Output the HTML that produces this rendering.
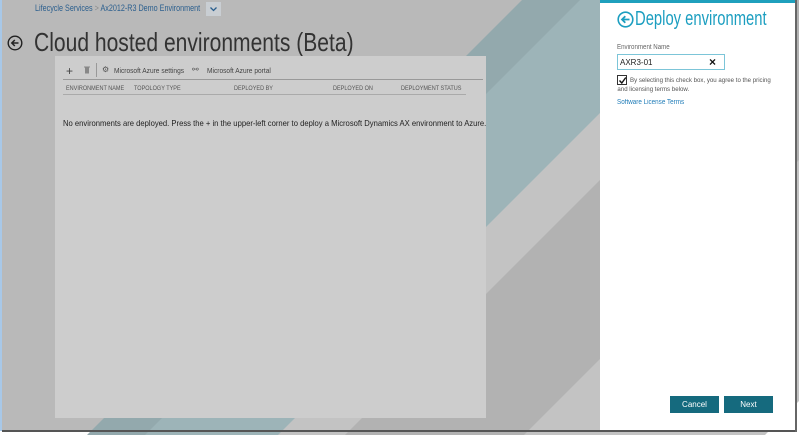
<!DOCTYPE html>
<html><head><meta charset="utf-8"><style>
*{margin:0;padding:0;box-sizing:border-box}
html,body{width:799px;height:435px;overflow:hidden}
body{background:#fff;position:relative;font-family:"Liberation Sans",sans-serif}
.a{position:absolute;white-space:nowrap}
svg{display:block}
.sx{transform-origin:0 0;display:inline-block}
</style></head><body>
<svg class="a" style="left:0;top:0" width="799" height="435">
<rect x="0" y="0" width="796" height="431" fill="#b9b9b9"/>
<polygon points="522,0 900,0 0,900 0,522" fill="#93a9ad"/>
<polygon points="580,0 900,0 0,900 0,580" fill="#9db4b8"/>
<polygon points="713,0 900,0 0,900 0,713" fill="#c3c3c3"/>
<polygon points="780,0 1000,0 0,1000 0,780" fill="#b2b2b2"/>
<polygon points="959,0 1200,0 0,1200 0,959" fill="#c3c3c3"/>
<rect x="0" y="0" width="2" height="431" fill="#a8c8e8"/>
<rect x="2" y="430" width="795" height="2" fill="#555"/>
<rect x="795" y="0" width="2" height="432" fill="#666"/>
</svg>
<div class="a" style="left:600px;top:0;width:195px;height:430px;background:#fff"></div>
<div class="a" style="left:600px;top:0;width:195px;height:3px;background:#1fa0bd"></div>

<div class="a" style="left:35px;top:3px;font-size:9px;color:#2b5f8e"><span class="sx" style="transform:scaleX(.8)">Lifecycle Services <span style="color:#888">&gt;</span> Ax2012-R3 Demo Environment</span></div>
<div class="a" style="left:206px;top:2px;width:15px;height:14px;background:#c9ced3"></div>
<svg class="a" style="left:209px;top:5px" width="9" height="8"><path d="M1.5 2.5 L4.5 5.5 L7.5 2.5" stroke="#2b5f8e" stroke-width="1.3" fill="none"/></svg>

<svg class="a" style="left:7px;top:35px" width="16" height="16"><circle cx="8" cy="8" r="6.8" stroke="#222" stroke-width="1.4" fill="none"/><path d="M11.5 8H4.8M7.8 5L4.8 8L7.8 11" stroke="#222" stroke-width="1.5" fill="none"/></svg>
<div class="a" style="left:34px;top:27px;font-size:26px;color:#333;font-weight:300"><span class="sx" style="transform:scaleX(.81)">Cloud hosted environments (Beta)</span></div>

<div class="a" style="left:55px;top:56px;width:431px;height:362px;background:#cdcdcd"></div>
<div class="a" style="left:66px;top:64px;font-size:12px;color:#444">+</div>
<svg class="a" style="left:84px;top:66px" width="6" height="8"><rect x="1" y="1.5" width="4" height="6" fill="#888"/><rect x="0" y="0.5" width="6" height="1" fill="#888"/></svg>
<div class="a" style="left:96px;top:63px;width:1px;height:14px;background:#999"></div>
<div class="a" style="left:102px;top:65px;font-size:8px;color:#555">⚙</div>
<div class="a" style="left:114px;top:66px;font-size:7.5px;color:#444"><span class="sx" style="transform:scaleX(.88)">Microsoft Azure settings</span></div>
<div class="a" style="left:192px;top:65px;font-size:8px;color:#555">⚯</div>
<div class="a" style="left:207px;top:66px;font-size:7.5px;color:#444"><span class="sx" style="transform:scaleX(.88)">Microsoft Azure portal</span></div>
<div class="a" style="left:63px;top:79px;width:420px;height:1px;background:#999"></div>
<div class="a" style="left:66px;top:85px;font-size:6.5px;color:#555"><span class="sx" style="transform:scaleX(.85)">ENVIRONMENT NAME</span></div>
<div class="a" style="left:134px;top:85px;font-size:6.5px;color:#555"><span class="sx" style="transform:scaleX(.85)">TOPOLOGY TYPE</span></div>
<div class="a" style="left:234px;top:85px;font-size:6.5px;color:#555"><span class="sx" style="transform:scaleX(.85)">DEPLOYED BY</span></div>
<div class="a" style="left:333px;top:85px;font-size:6.5px;color:#555"><span class="sx" style="transform:scaleX(.85)">DEPLOYED ON</span></div>
<div class="a" style="left:401px;top:85px;font-size:6.5px;color:#555"><span class="sx" style="transform:scaleX(.85)">DEPLOYMENT STATUS</span></div>
<div class="a" style="left:63px;top:94px;width:403px;height:1px;background:#aaa"></div>
<div class="a" style="left:63px;top:118px;font-size:8.5px;color:#222"><span class="sx" style="transform:scaleX(.9)">No environments are deployed. Press the + in the upper-left corner to deploy a Microsoft Dynamics AX environment to Azure.</span></div>

<svg class="a" style="left:617px;top:11px" width="17" height="17"><circle cx="8.5" cy="8.5" r="7.3" stroke="#1b9ec0" stroke-width="1.6" fill="none"/><path d="M12.5 8.5H5M8.3 5.2L5 8.5L8.3 11.8" stroke="#1b9ec0" stroke-width="1.8" fill="none"/></svg>
<div class="a" style="left:635px;top:8px;font-size:20px;color:#1b9ec0"><span class="sx" style="transform:scaleX(.74)">Deploy environment</span></div>
<div class="a" style="left:617px;top:44px;font-size:7px;color:#666"><span class="sx" style="transform:scaleX(.88)">Environment Name</span></div>
<div class="a" style="left:617px;top:54px;width:108px;height:16px;border:1.5px solid #7cc5d8;background:#fff"></div>
<div class="a" style="left:620px;top:58px;font-size:8px;color:#222">AXR3-01</div>
<div class="a" style="left:709px;top:55px;font-size:12px;color:#111;font-weight:bold">×</div>
<div class="a" style="left:617px;top:75px;width:10px;height:10px;border:1px solid #333;background:#fff"></div>
<svg class="a" style="left:618px;top:76px" width="9" height="9"><path d="M1.5 4.5L3.8 7L7.8 1.5" stroke="#111" stroke-width="1.4" fill="none"/></svg>
<div class="a" style="left:630px;top:76px;font-size:6.8px;color:#555;line-height:9px"><span class="sx" style="transform:scaleX(.9)">By selecting this check box, you agree to the pricing<br><span style="margin-left:-14px">and licensing terms below.</span></span></div>
<div class="a" style="left:617px;top:99px;font-size:7px;color:#1f7cb8"><span class="sx" style="transform:scaleX(.9)">Software License Terms</span></div>

<div class="a" style="left:670px;top:396px;width:49px;height:17px;background:#156a7e;color:#fff;font-size:8px;text-align:center;line-height:17px">Cancel</div>
<div class="a" style="left:724px;top:396px;width:49px;height:17px;background:#156a7e;color:#fff;font-size:8px;text-align:center;line-height:17px">Next</div>
</body></html>
